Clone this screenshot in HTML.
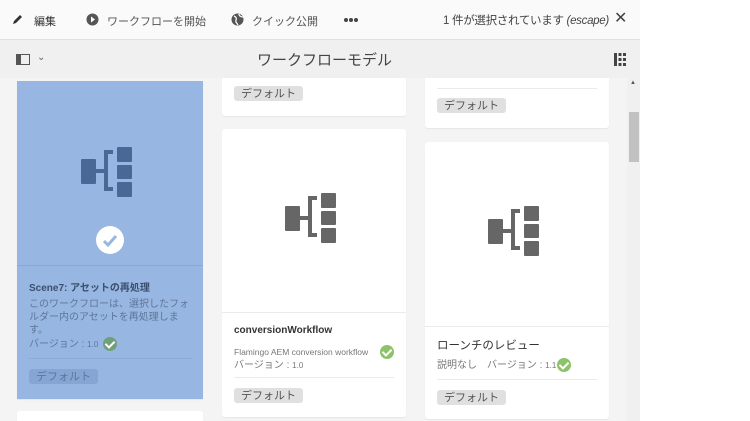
<!DOCTYPE html>
<html><head><meta charset="utf-8"><style>
*{margin:0;padding:0;box-sizing:border-box}
html,body{width:750px;height:421px;overflow:hidden}
body{background:#fff;font-family:"Liberation Sans","Noto Sans CJK JP",sans-serif;position:relative}
.a{position:absolute}
#top{left:0;top:0;width:640px;height:40px;background:#fafafa;border-bottom:1px solid #e0e0e0}
#hdr{left:0;top:40px;width:640px;height:38px;background:#f0f0f0}
#cnt{left:0;top:78px;width:627px;height:343px;background:#f4f4f4;overflow:hidden}
.card{position:absolute;background:#fff;border-radius:3px;box-shadow:0 1px 1px rgba(0,0,0,.06)}
.tag{position:absolute;background:#e0e0e0;color:#555;font-size:11px;border-radius:3px;padding:1px 7px;height:15px;line-height:14px}
.t{position:absolute;font-size:11px;color:#333;font-weight:bold}
.d{position:absolute;font-size:10px;color:#777;line-height:13px;white-space:nowrap}
.hr{position:absolute;height:1px;background:#eaeaea}
.ok{position:absolute;width:14px;height:14px;border-radius:50%;background:#8cc36a}
.ok:after{content:"";position:absolute;left:4px;top:2px;width:4px;height:7px;border:solid #fff;border-width:0 2px 2px 0;transform:rotate(45deg)}
.tb{position:absolute;font-size:11px;color:#555;top:13px;white-space:nowrap}
</style></head><body>
<div id="top" class="a"></div>
<svg class="a" style="left:12px;top:13px" width="12" height="12" viewBox="0 0 12 12"><path d="M1 11l1-3 6-6 2 2-6 6z" fill="#333"/></svg>
<div class="tb" style="left:34px;color:#333">編集</div>
<svg class="a" style="left:86px;top:13px" width="13" height="13" viewBox="0 0 13 13"><circle cx="6.5" cy="6.5" r="6" fill="#555"/><path d="M5 3.5l4 3-4 3z" fill="#fff"/></svg>
<div class="tb" style="left:107px">ワークフローを開始</div>
<svg class="a" style="left:231px;top:13px" width="13" height="13" viewBox="0 0 13 13"><circle cx="6.5" cy="6.5" r="6" fill="#555"/><path d="M3 3c2 1 3 2 2 4s1 3 2 5M8 1c0 2 2 3 4 3" stroke="#fafafa" stroke-width="1.3" fill="none"/></svg>
<div class="tb" style="left:252px">クイック公開</div>
<div class="a" style="left:344px;top:18px;width:4px;height:4px;border-radius:50%;background:#444;box-shadow:5px 0 #444,10px 0 #444"></div>
<div class="tb" style="left:443px;color:#444;font-size:11.5px;top:12px;letter-spacing:-0.3px">1 件が選択されています <i>(escape)</i></div>
<div class="a" style="left:614px;top:10px;font-size:16px;color:#444;line-height:18px">✕</div>
<div id="hdr" class="a"></div>
<svg class="a" style="left:16px;top:54px" width="14" height="11" viewBox="0 0 14 11"><rect x=".5" y=".5" width="13" height="10" fill="none" stroke="#555"/><rect x="1" y="1" width="4" height="9" fill="#555"/></svg>
<div class="a" style="left:37px;top:52px;font-size:10px;color:#666">⌄</div>
<div class="a" style="left:257px;top:49px;font-size:15px;color:#444">ワークフローモデル</div>
<svg class="a" style="left:614px;top:53px" width="12" height="13" viewBox="0 0 12 13"><g fill="#444"><rect x="0" y="0" width="3" height="13"/><rect x="4.5" y="0" width="3" height="3"/><rect x="4.5" y="5" width="3" height="3"/><rect x="4.5" y="10" width="3" height="3"/><rect x="9" y="0" width="3" height="3"/><rect x="9" y="5" width="3" height="3"/><rect x="9" y="10" width="3" height="3"/></g></svg>
<div id="cnt" class="a">
 <div class="card" style="left:17px;top:3px;width:186px;height:318px;background:#97b6e2;border-radius:0"></div>
 <div class="hr" style="left:17px;top:187px;width:186px;background:#8aa8d4"></div>
 <div class="card" style="left:17px;top:333px;width:186px;height:40px"></div>
 <div class="card" style="left:222px;top:-10px;width:184px;height:48px"></div>
 <div class="card" style="left:222px;top:51px;width:184px;height:288px"></div>
 <div class="card" style="left:425px;top:-10px;width:184px;height:60px"></div>
 <div class="card" style="left:425px;top:64px;width:184px;height:277px"></div>
</div>
<svg class="a" style="left:81px;top:147px" width="51" height="51" viewBox="0 0 51 51"><g fill="#4a6896"><rect x="0" y="12" width="15" height="25" rx="1"/><rect x="15" y="22" width="10" height="4"/><rect x="23" y="3" width="4" height="41"/><rect x="23" y="3" width="9" height="4"/><rect x="23" y="40" width="9" height="4"/><rect x="36" y="0" width="15" height="15" rx="1"/><rect x="36" y="18" width="15" height="14" rx="1"/><rect x="36" y="35" width="15" height="15" rx="1"/></g></svg>
<div class="a" style="left:96px;top:226px;width:28px;height:28px;border-radius:50%;background:#fff"></div>
<svg class="a" style="left:96px;top:226px" width="28" height="28"><path d="M8 15l4 4 8-9" stroke="#97b6e2" stroke-width="3" fill="none"/></svg>
<div class="t" style="left:29px;top:279px;color:#3b4f6e;font-size:10px">Scene7: アセットの再処理</div>
<div class="d" style="left:29px;top:298px;color:#5f7599;width:160px;font-size:10px;white-space:normal">このワークフローは、選択したフォルダー内のアセットを再処理します。</div>
<div class="d" style="left:29px;top:338px;color:#5f7599">バージョン : <span style="font-size:8px">1.0</span></div>
<div class="ok" style="left:103px;top:337px;background:#6fa07a"></div>
<div class="hr" style="left:29px;top:358px;width:163px;background:#8eabd7"></div>
<div class="tag" style="left:29px;top:369px;background:#86a5d3;color:#5f7599">デフォルト</div>
<div class="tag" style="left:234px;top:86px">デフォルト</div>
<div class="hr" style="left:437px;top:88px;width:160px"></div>
<div class="tag" style="left:437px;top:98px">デフォルト</div>
<svg class="a" style="left:285px;top:193px" width="51" height="51" viewBox="0 0 51 51"><g fill="#666"><rect x="0" y="13" width="15" height="25" rx="1"/><rect x="15" y="23" width="10" height="4"/><rect x="23" y="3" width="4" height="41"/><rect x="23" y="3" width="9" height="4"/><rect x="23" y="40" width="9" height="4"/><rect x="36" y="0" width="15" height="15" rx="1"/><rect x="36" y="18" width="15" height="14" rx="1"/><rect x="36" y="35" width="15" height="15" rx="1"/></g></svg>
<div class="hr" style="left:222px;top:312px;width:184px"></div>
<div class="t" style="left:234px;top:325px;font-size:10px">conversionWorkflow</div>
<div class="d" style="left:234px;top:346px;font-size:8.5px">Flamingo AEM conversion workflow</div>
<div class="ok" style="left:380px;top:345px"></div>
<div class="d" style="left:234px;top:359px">バージョン : <span style="font-size:8px">1.0</span></div>
<div class="hr" style="left:234px;top:377px;width:160px"></div>
<div class="tag" style="left:234px;top:388px">デフォルト</div>
<svg class="a" style="left:488px;top:206px" width="51" height="51" viewBox="0 0 51 51"><g fill="#666"><rect x="0" y="13" width="15" height="25" rx="1"/><rect x="15" y="23" width="10" height="4"/><rect x="23" y="3" width="4" height="41"/><rect x="23" y="3" width="9" height="4"/><rect x="23" y="40" width="9" height="4"/><rect x="36" y="0" width="15" height="15" rx="1"/><rect x="36" y="18" width="15" height="14" rx="1"/><rect x="36" y="35" width="15" height="15" rx="1"/></g></svg>
<div class="hr" style="left:425px;top:326px;width:184px"></div>
<div class="t" style="left:437px;top:337px;font-weight:normal;font-size:11.5px">ローンチのレビュー</div>
<div class="d" style="left:437px;top:359px">説明なし　バージョン : <span style="font-size:8px">1.1</span></div>
<div class="ok" style="left:557px;top:358px"></div>
<div class="hr" style="left:437px;top:379px;width:160px"></div>
<div class="tag" style="left:437px;top:390px">デフォルト</div>
<div class="a" style="left:627px;top:78px;width:13px;height:343px;background:#f0f0f0"></div>
<div class="a" style="left:629px;top:112px;width:10px;height:50px;background:#c1c1c1"></div>
<div class="a" style="left:630px;top:80px;font-size:6px;color:#555">▲</div>
</body></html>
